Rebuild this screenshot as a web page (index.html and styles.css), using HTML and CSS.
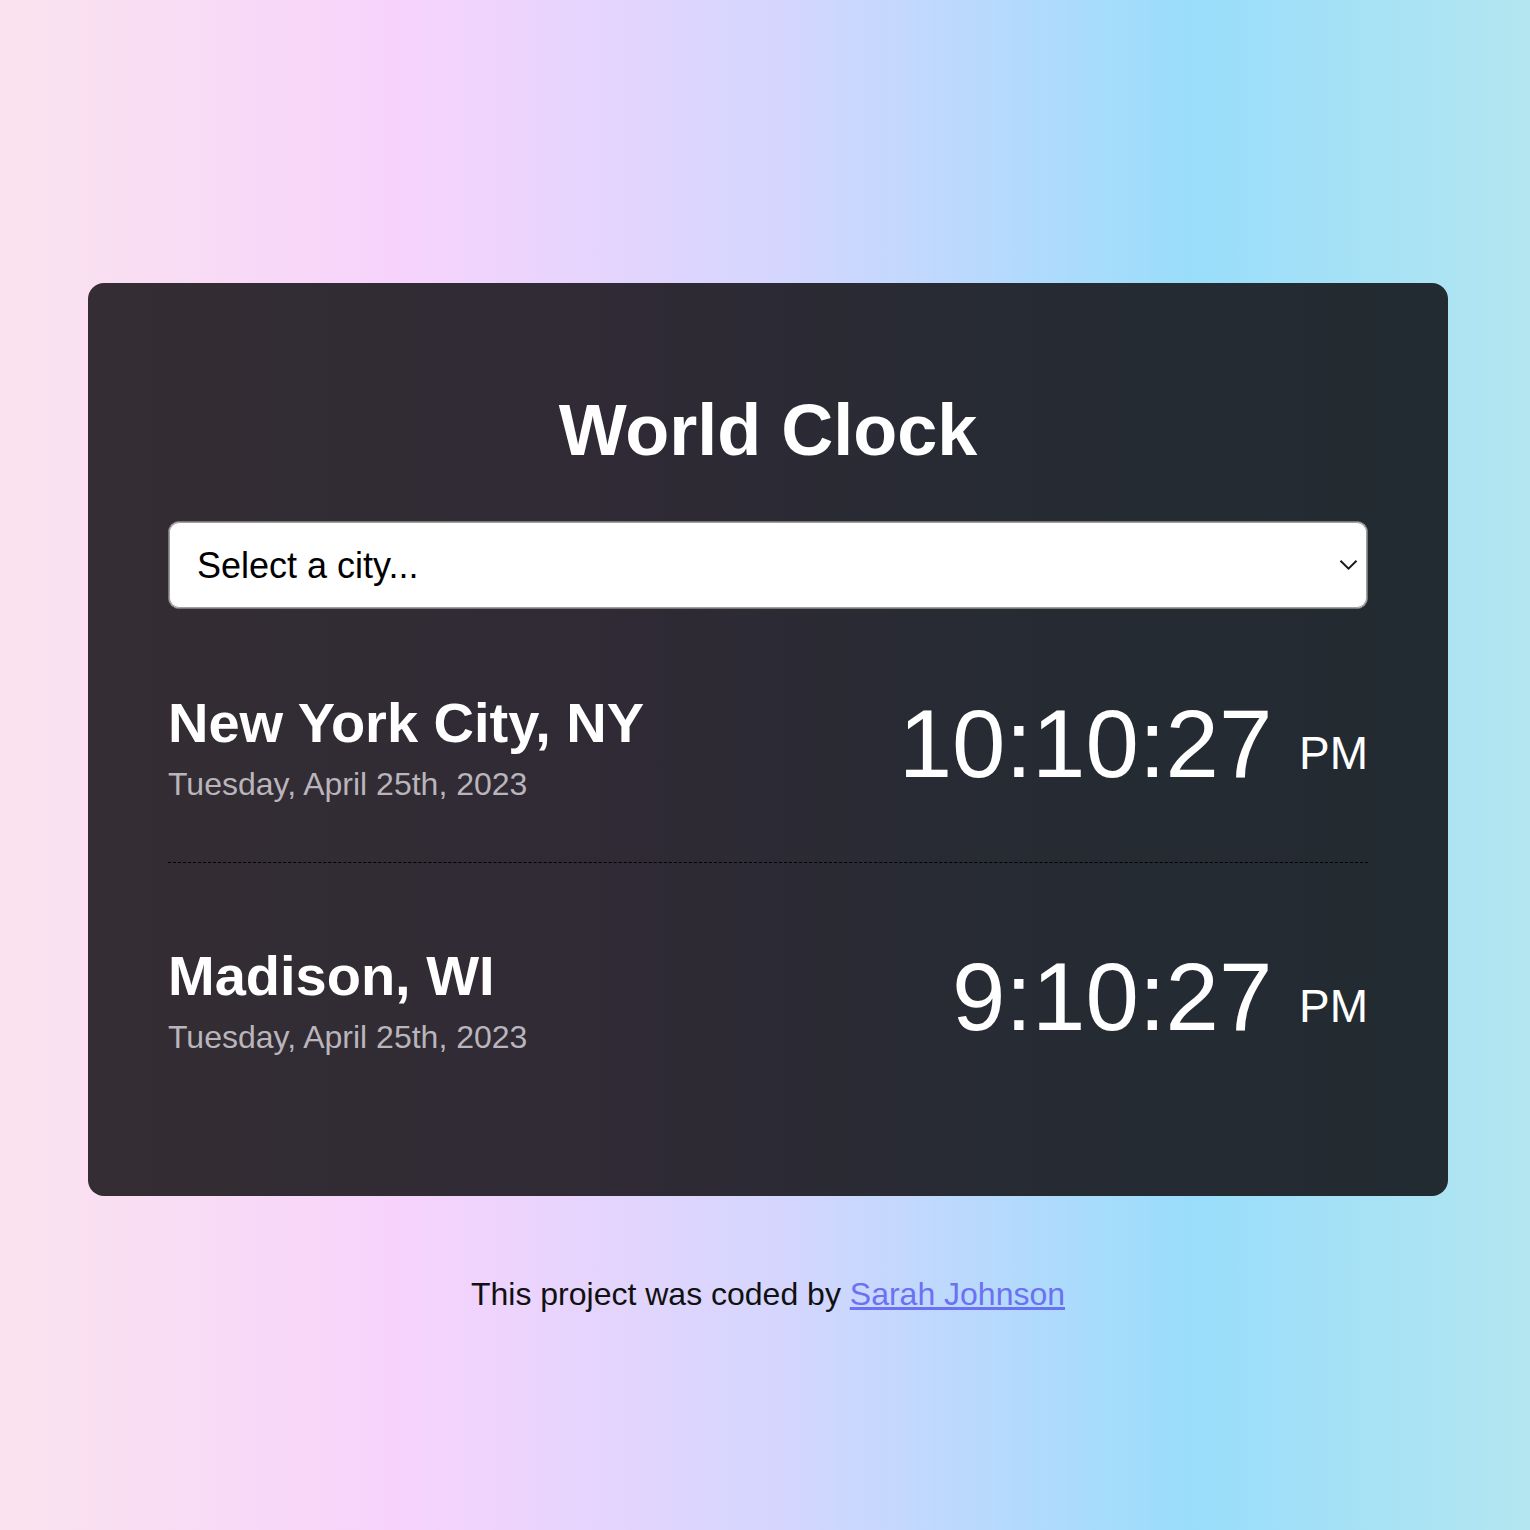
FILE: index.html
```html
<!DOCTYPE html>
<html lang="en">
<head>
<meta charset="utf-8">
<title>World Clock</title>
<link rel="stylesheet" href="styles.css">
</head>
<body>
<div class="page">
  <main class="card">
    <h1 class="title">World Clock</h1>
    <div class="select-wrap">
      <select class="city-select">
        <option>Select a city...</option>
        <option>Tokyo, Japan</option>
        <option>Paris, France</option>
      </select>
      <svg class="chevron" width="19" height="12" viewBox="0 0 19 12" aria-hidden="true"><polyline points="1.5,1.8 9.5,9.6 17.5,1.8" fill="none" stroke="#1a1a1a" stroke-width="2"/></svg>
    </div>
    <section class="cities">
      <div class="city">
        <div class="city-info">
          <h2 class="city-name">New York City, NY</h2>
          <div class="city-date">Tuesday, April 25th, 2023</div>
        </div>
        <div class="city-time">10:10:27 <span class="ampm">PM</span></div>
      </div>
      <div class="city">
        <div class="city-info">
          <h2 class="city-name">Madison, WI</h2>
          <div class="city-date">Tuesday, April 25th, 2023</div>
        </div>
        <div class="city-time">9:10:27 <span class="ampm">PM</span></div>
      </div>
    </section>
  </main>
  <footer class="footer">This project was coded by <a class="footer-link" href="#">Sarah Johnson</a></footer>
</div>
</body>
</html>
```

FILE: styles.css
```css
html, body {
  margin: 0;
  padding: 0;
}

body {
  min-height: 100vh;
  font-family: "Liberation Sans", Arial, sans-serif;
  background: linear-gradient(90deg, #fae3ee 0%, #f7d3fc 26%, #d3d6fe 52%, #99ddfb 78%, #b3e6f0 100%);
  padding-left: 6px;
  box-sizing: border-box;
}

.page {
  width: 1360px;
  margin: 0 auto;
  padding-top: 283px;
  padding-bottom: 60px;
}

.card {
  background: linear-gradient(90deg, #342d33 0%, #2f2a35 40%, #262b33 70%, #222b31 100%);
  border-radius: 16px;
  padding: 111px 80px 80px;
}

.title {
  margin: 0;
  color: #ffffff;
  font-size: 72px;
  line-height: 1;
  font-weight: 700;
  text-align: center;
}

.select-wrap {
  position: relative;
  margin-top: 55px;
}

.city-select {
  display: block;
  width: 100%;
  height: 88px;
  box-sizing: border-box;
  -webkit-appearance: none;
  appearance: none;
  background: #ffffff;
  border: 1px solid #767676;
  box-shadow: inset 0 0 0 1px #a0a0a0;
  border-radius: 11px;
  padding: 0 28px;
  font-family: "Liberation Sans", Arial, sans-serif;
  font-size: 36px;
  color: #000000;
}

.chevron {
  position: absolute;
  right: 10px;
  top: 38px;
  pointer-events: none;
}

.city {
  display: flex;
  justify-content: space-between;
  align-items: center;
  padding: 86px 0 62px;
  border-bottom: 1px dashed #000000;
}

.city:last-child {
  border-bottom: none;
  padding-top: 85px;
  padding-bottom: 63px;
}

.city-name {
  margin: 0;
  color: #ffffff;
  font-size: 56px;
  line-height: 1;
  font-weight: 700;
}

.city-date {
  margin-top: 17px;
  color: #b9b5bb;
  font-size: 32px;
  line-height: 1;
}

.city-time {
  color: #ffffff;
  font-size: 96px;
  line-height: 1;
  white-space: nowrap;
  margin-bottom: 8px;
}

.ampm {
  font-size: 46px;
  line-height: 1;
  vertical-align: 8px;
}

.footer {
  margin-top: 80px;
  text-align: center;
  font-size: 32px;
  line-height: 1.15;
  color: #111111;
}

.footer-link {
  color: #6c70f2;
  text-decoration: underline;
}
```
